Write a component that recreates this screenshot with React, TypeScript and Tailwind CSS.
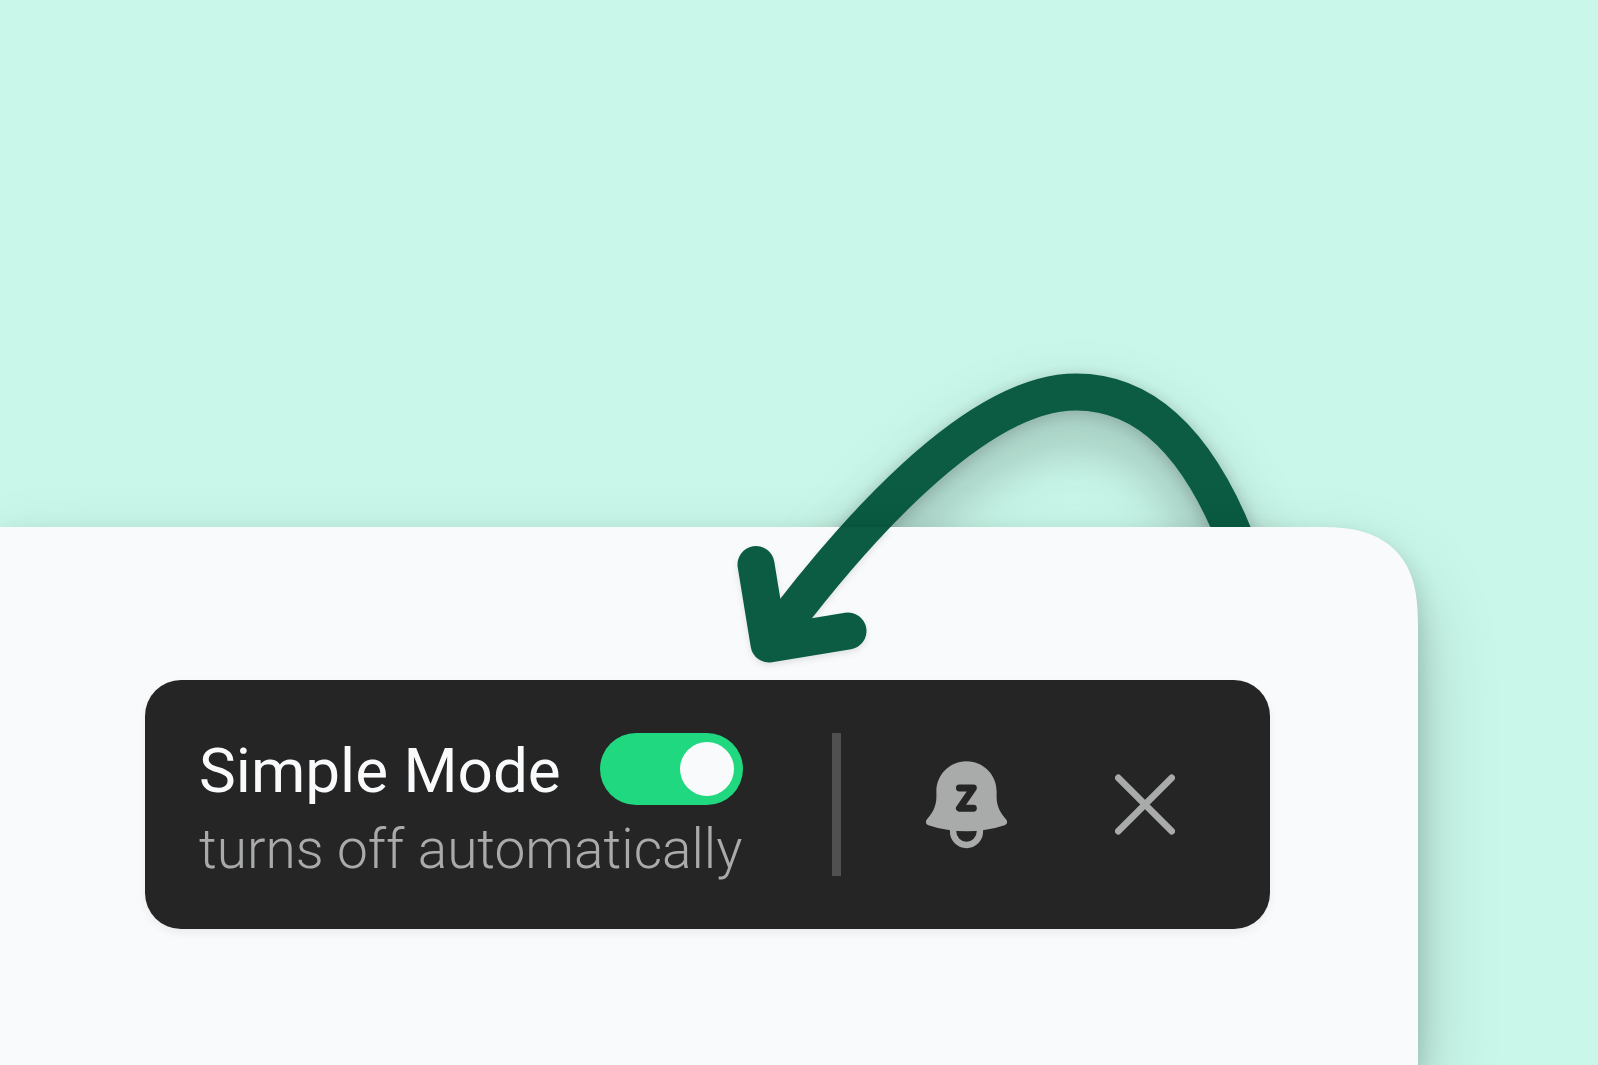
import React, { useState } from 'react';

const BellSnoozeIcon: React.FC = () => (
  <svg width="81" height="88" viewBox="0 0 81 88" fill="none" aria-hidden="true">
    <path
      d="M40.5 .3C57.1 .3 70.6 13.7 70.6 30.3V36C70.6 46 75 52.3 80 58.2C82 60.7 81.4 63.2 78.6 64.3C66 68.3 53.2 70.3 40.5 70.3C27.8 70.3 15 68.3 2.4 64.3C-.4 63.2 -1 60.7 1 58.2C6 52.3 10.4 46 10.4 36V30.3C10.4 13.7 23.9 .3 40.5 .3Z"
      fill="#a9abaa"
    />
    <path d="M27.1 68V70.6A13.4 13.4 0 0 0 53.9 70.6V68" stroke="#a9abaa" strokeWidth="6.4" />
    <path d="M33.4 27H47.4L33.4 47.2H47.4" stroke="#252525" strokeWidth="6.9" strokeLinecap="round" strokeLinejoin="round" />
  </svg>
);

const CloseIcon: React.FC = () => (
  <svg width="60" height="61" viewBox="0 0 60 61" fill="none" aria-hidden="true">
    <path d="M3.3 3.8L56.7 57.2M56.7 3.8L3.3 57.2" stroke="#a9abaa" strokeWidth="6.6" strokeLinecap="round" />
  </svg>
);

// The tail runs behind the panel, the head sits in front of it
const ArrowTail: React.FC = () => (
  <svg
    className="absolute right-[148px] -top-[167px] overflow-visible [filter:drop-shadow(0_4px_8px_rgba(0,0,0,0.2))_drop-shadow(0_28px_28px_rgba(0,0,0,0.28))]"
    width="540" height="310" viewBox="730 360 540 310" fill="none" aria-hidden="true"
  >
    <path
      d="M769 644C850 535 975 392 1076 392C1150 392 1200 450 1236 540L1260 600"
      stroke="#0b5c43" strokeWidth="37"
    />
  </svg>
);

const ArrowHead: React.FC = () => (
  <svg
    className="pointer-events-none absolute right-[148px] top-0 overflow-hidden drop-shadow-[0_3px_3px_rgba(0,0,0,0.1)]"
    width="540" height="143" viewBox="730 527 540 143" fill="none" aria-hidden="true"
  >
    <path d="M769 644C850 535 975 392 1076 392" stroke="#0b5c43" strokeWidth="37" />
    <path d="M756 564.5L769 644L848 631" stroke="#0b5c43" strokeWidth="37" strokeLinecap="round" strokeLinejoin="round" />
  </svg>
);

const SimpleModeBar: React.FC = () => {
  const [enabled, setEnabled] = useState(true);

  return (
    <section className="flex items-center rounded-[36px] bg-[#252525] py-[53px] pl-[54px] pr-[95px] shadow-[0_4px_10px_rgba(0,0,0,0.06)]">
      <div className="h-[143px] flex-1 whitespace-nowrap">
        <div className="flex items-center justify-between">
          <label htmlFor="simple-mode" className="pt-1 text-[62px] leading-[68px] text-[#f9fafc]">Simple Mode</label>
          <input
            id="simple-mode"
            type="checkbox"
            role="switch"
            checked={enabled}
            onChange={(e) => setEnabled(e.target.checked)}
            className="flex h-[72px] w-[143px] shrink-0 cursor-pointer appearance-none items-center rounded-full bg-[#505050] p-[9px] before:block before:size-[54px] before:rounded-full before:bg-[#f9fafc] before:content-[''] checked:justify-end checked:bg-[#20d87f]"
          />
        </div>
        <p className="mt-4 text-[55px] font-light leading-[56px] text-[#a9abaa]">turns off automatically</p>
      </div>

      <div className="ml-[89px] h-[143px] w-[9px] bg-[#505050]" />

      <button type="button" aria-label="Snooze" className="ml-[85px] cursor-pointer">
        <BellSnoozeIcon />
      </button>
      <button type="button" aria-label="Close" className="ml-[108px] cursor-pointer">
        <CloseIcon />
      </button>
    </section>
  );
};

export default function App() {
  return (
    <main className="flex min-h-screen flex-col overflow-hidden bg-[#c9f8ea] pt-[527px] font-['Roboto',sans-serif]">
      <div className="relative mr-[180px] flex flex-1 flex-col">
        <ArrowTail />
        <div className="relative flex-1 rounded-tr-[98px] [corner-shape:superellipse(1.37)] bg-[#f9fafc] pt-[153px] pr-[148px] pb-[136px] pl-[145px] shadow-[0_10px_24px_rgba(0,0,0,0.16),0_40px_80px_rgba(0,0,0,0.22)]">
          <SimpleModeBar />
        </div>
        <ArrowHead />
      </div>
    </main>
  );
}
